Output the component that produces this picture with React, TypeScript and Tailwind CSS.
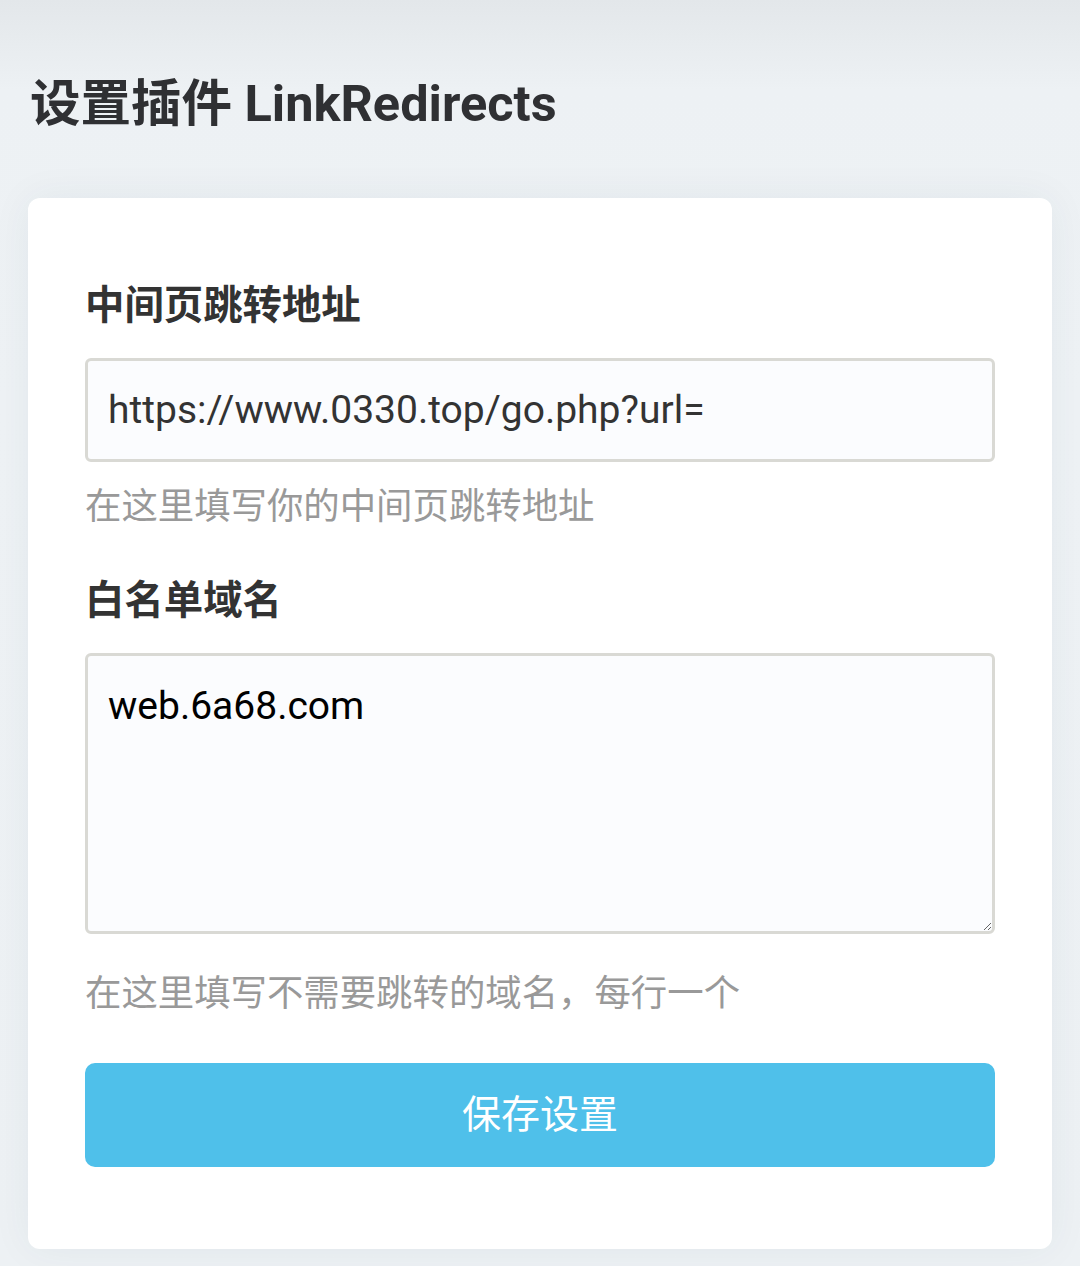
import React, { useState } from 'react';

const FONT = { fontFamily: 'Roboto, "Noto Sans CJK SC", sans-serif' };

export default function App() {
    const [url, setUrl] = useState('https://www.0330.top/go.php?url=');
    const [whitelist, setWhitelist] = useState('web.6a68.com');

    return (
        <div
            className="min-h-[1266px] w-full bg-[linear-gradient(to_bottom,#e3e7ea_0px,#edf1f4_90px,#eef2f5_400px,#edf1f4_100%)] px-[28px] pt-[72px] pb-[18px]"
            style={FONT}
        >
            <h1 className="pl-[2px] text-[50.5px] leading-[64px] font-bold text-[#2f3033]">设置插件 LinkRedirects</h1>

            <div className="mt-[62px] rounded-[12px] bg-white px-[57px] pt-[80px] pb-[82px] shadow-[0_0_40px_rgba(40,60,80,0.06)]">
                <label className="block text-[39.4px] leading-[56px] font-bold text-[#333]">中间页跳转地址</label>
                <input
                    type="text"
                    value={url}
                    onChange={(e) => setUrl(e.target.value)}
                    className="mt-[24px] block h-[104px] w-full rounded-[6px] border-[3px] border-[#d9d9d4] bg-[#fbfcfe] px-[20px] text-[39px] text-[#333] outline-none"
                />
                <p className="mt-[17px] text-[36.4px] leading-[56px] text-[#999]">在这里填写你的中间页跳转地址</p>

                <label className="mt-[38px] block text-[39.4px] leading-[56px] font-bold text-[#333]">白名单域名</label>
                <textarea
                    value={whitelist}
                    onChange={(e) => setWhitelist(e.target.value)}
                    className="mt-[24px] block h-[281px] w-full resize-y rounded-[6px] border-[3px] border-[#d9d9d4] bg-[#fbfcfe] px-[20px] pt-[24px] text-[39px] leading-[52px] text-black outline-none"
                />
                <p className="mt-[32px] text-[36.4px] leading-[56px] text-[#999]">在这里填写不需要跳转的域名，每行一个</p>

                <button className="mt-[41px] block h-[104px] w-full rounded-[10px] bg-[#4fc0ea] text-[39px] text-white">
                    保存设置
                </button>
            </div>
        </div>
    );
}
